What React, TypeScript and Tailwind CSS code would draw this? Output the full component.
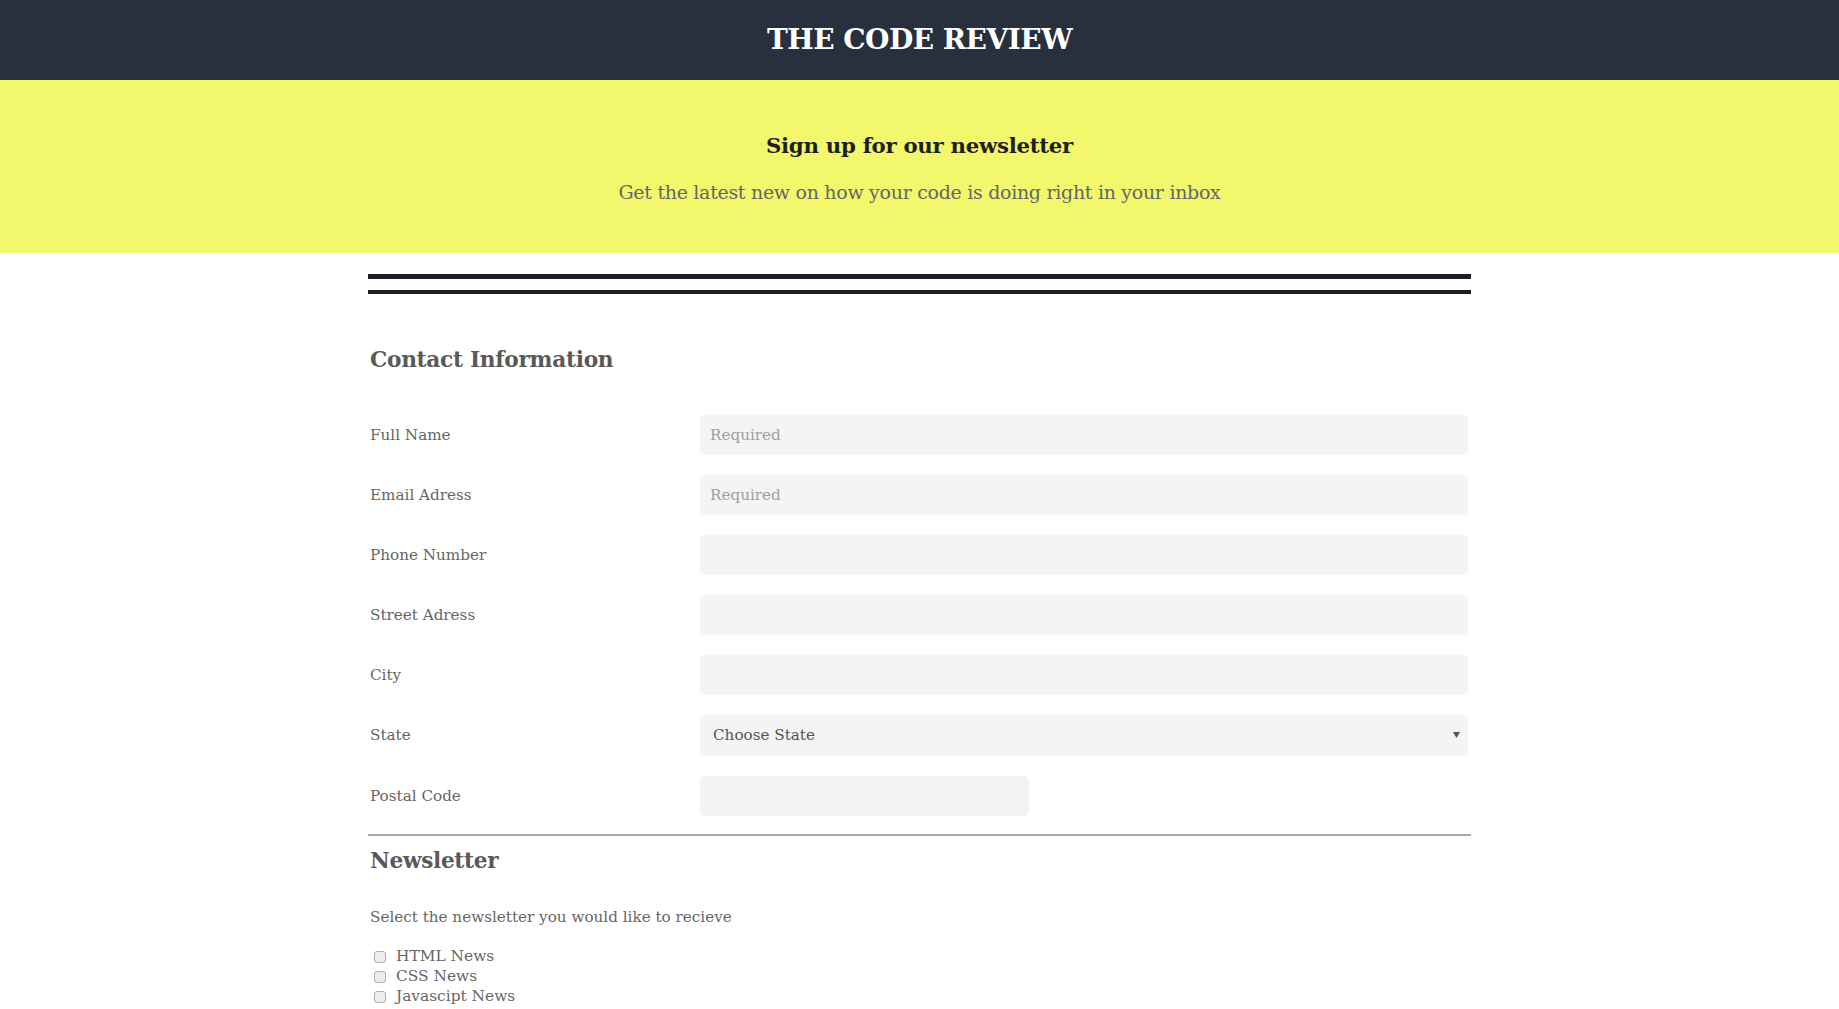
import React from "react";

const serif = { fontFamily: '"DejaVu Serif", "Liberation Serif", serif' };

function Row({ label, placeholder, narrow }: { label: string; placeholder?: string; narrow?: boolean }) {
  return (
    <div className="flex items-center h-[40px] mb-[20px]">
      <label className="w-[332px] pl-[2px] text-[15.2px] text-[#666]">{label}</label>
      <div className="flex-1 pr-[3px]">
        <input
          placeholder={placeholder}
          className={`h-[40px] ${narrow ? "w-[329px]" : "w-full"} bg-[#f4f4f4] rounded-[5px] px-[10px] text-[15.2px] text-[#444] placeholder:text-[#a0a0a0] outline-none`}
          style={serif}
        />
      </div>
    </div>
  );
}

export default function App() {
  return (
    <div className="min-h-screen bg-white" style={serif}>
      <header className="h-[80px] bg-[#282f3d] flex items-center justify-center">
        <h1 className="text-white font-bold text-[28px] tracking-[-0.5px]">THE CODE REVIEW</h1>
      </header>
      <section className="h-[173px] bg-[#f2f76c] flex flex-col items-center pt-[53px]">
        <h2 className="text-[#1f1f1f] font-bold text-[21.3px] leading-[26px] tracking-[-0.3px]">Sign up for our newsletter</h2>
        <p className="mt-[22px] text-[#666] text-[19px] leading-[22px] tracking-[-0.3px]">
          Get the latest new on how your code is doing right in your inbox
        </p>
      </section>
      <main className="w-[1103px] mx-auto pb-[40px]">
        <div className="mt-[21px] h-[5px] bg-[#1b1f25]" />
        <div className="mt-[11px] h-[4px] bg-[#1b1f25]" />
        <h3 className="mt-[52px] pl-[2px] text-[21.7px] leading-[28px] font-bold text-[#595959] tracking-[-0.3px]">
          Contact Information
        </h3>
        <div className="mt-[41px]">
          <Row label="Full Name" placeholder="Required" />
          <Row label="Email Adress" placeholder="Required" />
          <Row label="Phone Number" />
          <Row label="Street Adress" />
          <Row label="City" />
          <div className="flex items-center h-[41px] mb-[20px] mt-[1px]">
            <label className="w-[332px] pl-[2px] text-[15.2px] text-[#666]">State</label>
            <div className="flex-1 pr-[3px]">
              <div className="relative h-[41px] w-full bg-[#f4f4f4] rounded-[5px] flex items-center px-[13px]">
                <span className="text-[15.2px] text-[#555]">Choose State</span>
                <svg className="absolute right-[8px] top-[17px]" width="7" height="6" viewBox="0 0 7 6">
                  <path d="M0 0 H7 L3.5 6 Z" fill="#555" />
                </svg>
              </div>
            </div>
          </div>
          <Row label="Postal Code" narrow />
        </div>
        <div className="-mt-[2px] h-[2px] bg-[#aaaaaa]" />
        <h3 className="mt-[10px] pl-[2px] text-[21.6px] leading-[30px] font-bold text-[#595959] tracking-[-0.3px]">
          Newsletter
        </h3>
        <p className="mt-[30px] pl-[2px] text-[15.2px] leading-[22px] text-[#666]">
          Select the newsletter you would like to recieve
        </p>
        <div className="mt-[19px] flex flex-col">
          {["HTML News", "CSS News", "Javascipt News"].map((t) => (
            <label key={t} className="flex items-center h-[20px] text-[15.4px] text-[#666]">
              <input
                type="checkbox"
                className="appearance-none ml-[6px] mr-[10px] w-[12px] h-[12px] rounded-[3px] border border-[#b0b0b0] bg-[#ededed]"
              />
              {t}
            </label>
          ))}
        </div>
      </main>
    </div>
  );
}
